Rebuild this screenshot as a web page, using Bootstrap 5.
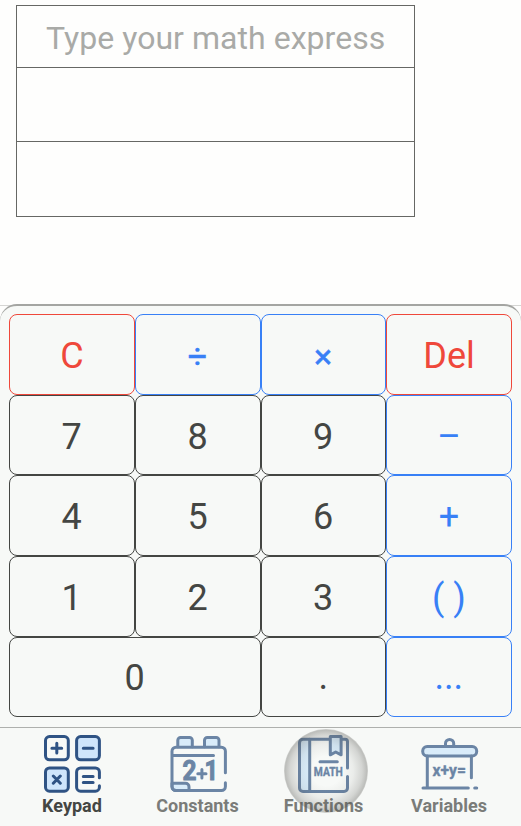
<!DOCTYPE html>
<html lang="en">
<head>
<meta charset="utf-8">
<meta name="viewport" content="width=device-width, initial-scale=1">
<title>Calculator</title>
<link href="https://cdn.jsdelivr.net/npm/bootstrap@5.3.0/dist/css/bootstrap.min.css" rel="stylesheet">
<style>
  body { font-family: Roboto, sans-serif; background: #fefefd; color: #444643; height: 826px; }
  .sheet { width: 399px; height: 212px; margin: 5px 0 0 16px; border: 1px solid #666764; display: grid; grid-template-rows: 61px 74px 75px; }
  .sheet > div + div { border-top: 1px solid #666764; }
  .sheet > div { padding-left: 29px; }
  .hint { color: #a9aaa7; font-size: 32px; line-height: 64px; letter-spacing: .04px; }
  .edge { height: 1px; background: #d6d6d4; margin-top: 88px; }
  .panel { margin-top: -2px; height: 522px; background: #f7f9f7; border-top: 2px solid #a4a5a2; border-radius: 17px 17px 0 0; }
  .keys, .tabs { display: grid; grid-template-columns: 126px 126px 125px 126px; padding: 0 9px; }
  .keys { padding-top: 8px; grid-template-rows: 81px 80px 81px 81px 80px; height: 421px; }
  .key { border: 1px solid #444643; border-radius: 8px; background: transparent; color: #444643; font-size: 36px; line-height: 1; padding: 3px 1px 0 0; }
  .key.op { border-color: #3880f6; color: #3880f6; padding-right: 0; }
  .key.sym { -webkit-text-stroke: .4px #3880f6; font-size: 34px; padding: 2px 1px 0 0; }
  .key.red { border-color: #ef483b; color: #ef483b; padding-right: 0; }
  .key.wide { grid-column: span 2; padding-top: 2px; }
  .key.dots { font-family: Lato, sans-serif; font-size: 33px; letter-spacing: 1.7px; padding: 0 0 1px 1px; }
  .tabs { border-top: 1px solid #aeb0ad; height: 99px; position: relative; }
  .tab { font-weight: 700; font-size: 18px; line-height: 22px; color: #7a7c79; }
  .tab.on { color: #444643; }
  .tab svg { display: block; width: 60px; height: 60px; margin: 6px 0 0 33px; overflow: visible; fill: none; stroke: #6b85a5; stroke-width: 3; stroke-linecap: round; stroke-linejoin: round; }
  .tab.on svg { stroke: #2f5384; }
  .tab svg text { fill: #6b85a5; stroke-width: .4; font-weight: 700; }
  .tab svg text.heavy { stroke-width: 1; }
  .tint { fill: #d9ecfa; }
  .tab.on .tint { fill: #cfe5fb; }
  .tab .name { width: 126px; text-align: center; padding-top: 1px; }
  .tab .name.snug { width: 125px; }
  .press { position: absolute; left: 284px; top: 1px; width: 84px; height: 84px; border-radius: 50%; background: radial-gradient(circle closest-side, rgba(70,70,65,0) 35%, rgba(70,70,65,.07) 65%, rgba(70,70,65,.2) 86%, rgba(70,70,65,.33) 97%, rgba(70,70,65,.22) 100%); }
</style>
<script src="https://cdn.jsdelivr.net/npm/bootstrap@5.3.0/dist/js/bootstrap.bundle.min.js"></script>
</head>
<body class="overflow-hidden">
<main>
  <section class="sheet"><div class="hint text-nowrap overflow-hidden">Type your math express</div><div></div><div></div></section>
  <div class="edge"></div>
  <section class="panel">
    <div class="keys">
      <button class="key red">C</button><button class="key op sym">÷</button><button class="key op sym">×</button><button class="key red">Del</button>
      <button class="key">7</button><button class="key">8</button><button class="key">9</button><button class="key op">–</button>
      <button class="key">4</button><button class="key">5</button><button class="key">6</button><button class="key op">+</button>
      <button class="key">1</button><button class="key">2</button><button class="key">3</button><button class="key op">( )</button>
      <button class="key wide">0</button><button class="key dots">.</button><button class="key op dots">...</button>
    </div>
    <nav class="tabs">
      <div class="tab on">
        <svg viewBox="0 0 60 60"><rect x="3.5" y="2.6" width="22.8" height="23.2" rx="4"/><rect class="tint" x="34.6" y="2.6" width="22.8" height="23.2" rx="4"/><rect class="tint" x="3.5" y="34" width="22.8" height="23.2" rx="4"/><path d="M57.4 43.8V38a4 4 0 0 0-4-4H38.6a4 4 0 0 0-4 4v15.2a4 4 0 0 0 4 4h14.8a4 4 0 0 0 4-4v-1.4M14.8 9.3v9.8M9.9 14.2h9.8M41.3 14.2h9.8M11.3 42l7 7.2M18.3 42l-7 7.2M41.3 42.6h9.8M41.3 48.6h9.8"/></svg>
        <div class="name">Keypad</div>
      </div>
      <div class="tab">
        <svg viewBox="0 0 60 60"><path class="tint" d="M9.8 12.8V6.3a2.8 2.8 0 0 1 2.8-2.8h8.9a2.8 2.8 0 0 1 2.8 2.8v6.5M36.5 12.8V6.3a2.8 2.8 0 0 1 2.8-2.8h8.9a2.8 2.8 0 0 1 2.8 2.8v6.5"/><path class="tint" d="M4 49.3h13.5a3.5 3.5 0 0 1 3.5 3.5v3.7H8a4 4 0 0 1-4-4z"/><path d="M57.4 38.8V17.2a4 4 0 0 0-4-4H8a4 4 0 0 0-4 4v35.3a4 4 0 0 0 4 4h45.4a4 4 0 0 0 4-4v-3.8M4 21.4h41.5"/><text class="heavy" x="14.4" y="46" font-size="27" textLength="14" lengthAdjust="spacingAndGlyphs">2</text><path d="M33.9 35.5v8.4M29.8 39.7h8.2"/><text class="heavy" x="36.6" y="46" font-size="27" textLength="13.6" lengthAdjust="spacingAndGlyphs">1</text></svg>
        <div class="name snug">Constants</div>
      </div>
      <div class="tab">
        <svg viewBox="0 0 60 60"><path class="tint" d="M15.7 5.2H9a3.5 3.5 0 0 0-3.5 3.5V54A3.5 3.5 0 0 0 9 57.5h6.7z"/><path d="M36 5.2H15.7M47.5 5.2H51a2.5 2.5 0 0 1 2.5 2.5V34M15.7 57.5H50a3.5 3.5 0 0 0 3.5-3.5V42.6M26 27.7h17.3"/><path class="tint" d="M36.3 2.5h10.8v18.3l-5.4-2.8-5.4 2.8z"/><text x="19.8" y="42.3" font-size="13" textLength="29" lengthAdjust="spacingAndGlyphs">MATH</text></svg>
        <div class="name snug">Functions</div>
      </div>
      <div class="tab">
        <svg viewBox="0 0 60 60"><path d="M26.5 12V9.5a4.1 4.1 0 0 1 8.2 0V12"/><rect class="tint" x="3.7" y="12.6" width="54" height="9.4" rx="4.5"/><path d="M8.3 22v31.5M52.4 22v21.8M4 54h45.3M55.7 54h2"/><text x="13.5" y="42" font-size="17" textLength="33.5" lengthAdjust="spacingAndGlyphs">x+y=</text></svg>
        <div class="name">Variables</div>
      </div>
      <div class="press"></div>
    </nav>
  </section>
</main>
</body>
</html>
